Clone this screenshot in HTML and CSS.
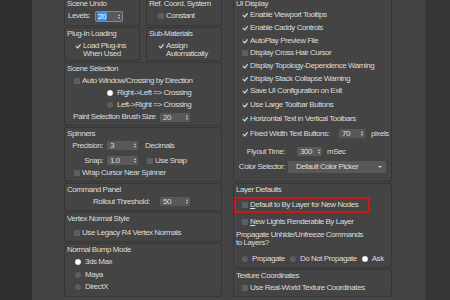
FILE: index.html
```html
<!DOCTYPE html>
<html lang="en">
<head>
<meta charset="UTF-8">
<meta name="viewport" content="width=device-width, initial-scale=1.0">
<title>Preference Settings - General</title>
<link rel="stylesheet" href="styles.css">
</head>
<body>
<div class="window">
    <div class="rail"></div>
    <div class="page">
        <!-- left column -->
        <div class="col col-left">
            <div class="pair">
                <div class="group g-undo">
                    <div class="title">Scene Undo</div>
                    <div class="row">
                        <span class="lbl l-levels">Levels:</span>
                        <span class="spin w26 focused"><span class="val"><span class="sel">20</span></span><span class="arrows"></span></span>
                    </div>
                </div>
                <div class="group g-undo">
                    <div class="title">Ref. Coord. System</div>
                    <div class="row check in9"><span class="cb"></span>Constant</div>
                </div>
            </div>
            <div class="pair">
                <div class="group g-plugin">
                    <div class="title">Plug-In Loading</div>
                    <div class="check multi in8"><span class="cb on"></span><span>Load Plug-ins<br>When Used</span></div>
                </div>
                <div class="group g-plugin">
                    <div class="title">Sub-Materials</div>
                    <div class="check multi in9"><span class="cb on"></span><span>Assign<br>Automatically</span></div>
                </div>
            </div>
            <div class="group">
                <div class="title">Scene Selection</div>
                <div class="row check in7"><span class="cb"></span>Auto Window/Crossing by Direction</div>
                <div class="row radio in40"><span class="rb on"></span>Right-&gt;Left =&gt; Crossing</div>
                <div class="row radio in40"><span class="rb"></span>Left-&gt;Right =&gt; Crossing</div>
                <div class="row">
                    <span class="lbl l-paint">Paint Selection Brush Size</span>
                    <span class="spin w30"><span class="val">20</span><span class="arrows"></span></span>
                </div>
            </div>
            <div class="group">
                <div class="title">Spinners</div>
                <div class="row r-prec">
                    <span class="lbl l-spin">Precision:</span>
                    <span class="spin w31 gap4"><span class="val">3</span><span class="arrows"></span></span>
                    <span class="after-spin">Decimals</span>
                </div>
                <div class="row r-snap">
                    <span class="lbl l-spin">Snap:</span>
                    <span class="spin w31 gap4"><span class="val">1.0</span><span class="arrows"></span></span>
                    <span class="check snap"><span class="cb"></span>Use Snap</span>
                </div>
                <div class="row check in7"><span class="cb"></span>Wrap Cursor Near Spinner</div>
            </div>
            <div class="group g-cmd">
                <div class="title">Command Panel</div>
                <div class="row r-roll">
                    <span class="lbl l-roll">Rollout Threshold:</span>
                    <span class="spin w30"><span class="val">50</span><span class="arrows"></span></span>
                </div>
            </div>
            <div class="group g-vert">
                <div class="title">Vertex Normal Style</div>
                <div class="row check in7"><span class="cb"></span>Use Legacy R4 Vertex Normals</div>
            </div>
            <div class="group g-bump">
                <div class="title">Normal Bump Mode</div>
                <div class="row tall radio in8"><span class="rb on"></span>3ds Max</div>
                <div class="row tall radio in8"><span class="rb"></span>Maya</div>
                <div class="row tall radio in8"><span class="rb"></span>DirectX</div>
            </div>
        </div>

        <!-- right column -->
        <div class="col col-right">
            <div class="group g-ui">
                <div class="title t-ui">UI Display</div>
                <div class="row ui check in6"><span class="cb on"></span>Enable Viewport Tooltips</div>
                <div class="row ui check in6"><span class="cb on"></span>Enable Caddy Controls</div>
                <div class="row ui check in6"><span class="cb on"></span>AutoPlay Preview File</div>
                <div class="row ui check in6"><span class="cb"></span>Display Cross Hair Cursor</div>
                <div class="row ui check in6"><span class="cb on"></span>Display Topology-Dependence Warning</div>
                <div class="row ui check in6"><span class="cb on"></span>Display Stack Collapse Warning</div>
                <div class="row ui check in6"><span class="cb on"></span>Save UI Configuration on Exit</div>
                <div class="row ui-wide check in6"><span class="cb on"></span>Use Large Toolbar Buttons</div>
                <div class="row ui-wide check in6"><span class="cb on"></span>Horizontal Text in Vertical Toolbars</div>
                <div class="row ui-wide check in6">
                    <span class="cb on"></span><span class="lbl l-fixed">Fixed Width Text Buttons:</span>
                    <span class="spin w26"><span class="val">70</span><span class="arrows"></span></span>
                    <span class="unit">pixels</span>
                </div>
                <div class="row r-flyout">
                    <span class="lbl l-form">Flyout Time:</span>
                    <span class="spin w25 flyout"><span class="val">300</span><span class="arrows"></span></span>
                    <span class="unit">mSec</span>
                </div>
                <div class="row r-color">
                    <span class="lbl l-form">Color Selector:</span>
                    <span class="select">Default Color Picker<span class="caret"></span></span>
                </div>
            </div>
            <div class="group g-layer">
                <div class="title">Layer Defaults</div>
                <div class="highlight check"><span class="cb"></span><span><u>D</u>efault to By Layer for New Nodes</span></div>
                <div class="row check in6 r-lights"><span class="cb"></span><span><u>N</u>ew Lights Renderable By Layer</span></div>
                <div class="note">Propagate Unhide/Unfreeze Commands<br>to Layers?</div>
                <div class="row r-prop">
                    <span class="radio in6"><span class="rb"></span>Propagate</span>
                    <span class="radio in5"><span class="rb"></span>Do Not Propagate</span>
                    <span class="radio in5"><span class="rb on"></span>Ask</span>
                </div>
            </div>
            <div class="group g-tex">
                <div class="title">Texture Coordinates</div>
                <div class="row check in6"><span class="cb"></span>Use Real-World Texture Coordinates</div>
            </div>
        </div>
    </div>
    <div class="edge"></div>
</div>
</body>
</html>
```

FILE: styles.css
```css
body {
    margin: 0;
    font-family: "Liberation Sans", Arial, sans-serif;
    font-size: 8px;
    letter-spacing: -0.45px;
    color: #dcdcdc;
    background: #2f2f2f;
}
.window {
    display: flex;
    width: 450px;
    height: 300px;
    overflow: hidden;
}
.rail {
    width: 32px;
    background: #2f2f2f;
}
.page {
    width: 393px;
    padding-left: 32px;
    box-sizing: border-box;
    background: #444444;
    display: flex;
    gap: 11px;
}
.edge {
    flex: 1;
    background: #373737;
}
.col {
    display: flex;
    flex-direction: column;
    gap: 1px;
    margin-top: -3px;
}
.col-left {
    width: 158px;
}
.col-right {
    width: 159px;
}
.pair {
    display: flex;
    gap: 6px;
}
.pair .group {
    flex: 1;
}

/* group boxes */
.group {
    border: 1px solid #363636;
    border-radius: 2px;
    padding: 0 2px 2px;
}
.title {
    height: 12px;
    line-height: 12px;
    white-space: nowrap;
}
.g-undo {
    padding-bottom: 3px;
}
.g-plugin .check {
    margin-top: 2px;
}
.g-cmd {
    padding-bottom: 3px;
}
.g-vert .row {
    margin-top: 2px;
}
.g-bump .row:first-of-type {
    margin-top: 1px;
}
.g-ui {
    padding-bottom: 8px;
}
.t-ui {
    height: 11px;
    line-height: 11px;
}

/* rows */
.row {
    display: flex;
    align-items: center;
    height: 12px;
    line-height: 12px;
    white-space: nowrap;
}
.row.tall {
    height: 12.5px;
}
.row.ui {
    height: 12.7px;
}
.row.ui-wide {
    height: 14.3px;
}
.r-prec {
    height: 11px;
}
.r-snap {
    margin-top: 3px;
    height: 13px;
}
.r-roll {
    height: 11px;
}
.r-flyout {
    margin-top: 5px;
}
.r-color {
    margin-top: 3px;
}
.r-lights {
    margin-top: 3px;
    height: 13px;
}
.r-prop {
    margin-top: 5.5px;
}
.note {
    margin-top: 2.5px;
    line-height: 8px;
    white-space: nowrap;
}

.in5 { margin-left: 5px; }
.in6 { margin-left: 6px; }
.in7 { margin-left: 7px; }
.in8 { margin-left: 8px; }
.in9 { margin-left: 9px; }
.in40 { margin-left: 40px; }

/* labels */
.lbl {
    flex: none;
}
.l-levels {
    margin-left: 1px;
    width: 28px;
}
.l-paint {
    margin-left: 6px;
    width: 87px;
}
.l-spin {
    width: 36px;
    text-align: right;
}
.l-roll {
    margin-left: 26px;
    width: 67px;
}
.l-fixed {
    width: 87px;
}
.l-form {
    width: 49px;
    text-align: right;
}
.after-spin {
    margin-left: 7px;
}
.unit {
    margin-left: 4px;
}
.r-flyout .unit {
    margin-left: 5px;
}

/* checkboxes and radios */
.check, .radio {
    display: flex;
    align-items: center;
    white-space: nowrap;
}
.check {
    gap: 2px;
}
.radio {
    gap: 4px;
}
.check.multi {
    align-items: flex-start;
    line-height: 8px;
}
.check.multi .cb {
    margin-top: 1px;
}
.check.snap {
    margin-left: 9px;
}
.cb {
    flex: none;
    position: relative;
    width: 6px;
    height: 6px;
    background: #5e5e5e;
}
.cb.on {
    background: #4c4c4c;
}
.cb.on::after {
    content: "";
    position: absolute;
    left: 2px;
    top: 0;
    width: 1.5px;
    height: 3.5px;
    border-right: 1.2px solid #e6e6e6;
    border-bottom: 1.2px solid #e6e6e6;
    transform: rotate(40deg);
}
.rb {
    flex: none;
    width: 6px;
    height: 6px;
    border-radius: 50%;
    background: #5e5e5e;
}
.rb.on {
    background: radial-gradient(circle, #ffffff 45%, #a8a8a8 100%);
}

/* spinners */
.spin {
    flex: none;
    display: flex;
    align-items: center;
    height: 9px;
    background: #595959;
    border-radius: 1px;
    line-height: 9px;
}
.spin .val {
    flex: 1;
    padding-left: 3px;
}
.spin .sel {
    background: #3a8ee6;
    color: #fff;
    padding: 0 1px;
}
.spin.focused .val {
    padding-left: 1px;
}
.spin.focused {
    box-shadow: 0 0 0 1px #6a8fb5;
}
.arrows {
    flex: none;
    width: 7px;
    display: flex;
    flex-direction: column;
    align-items: center;
    gap: 1px;
}
.arrows::before,
.arrows::after {
    content: "";
    width: 0;
    height: 0;
    border-left: 1.5px solid transparent;
    border-right: 1.5px solid transparent;
}
.arrows::before {
    border-bottom: 2px solid #d0d0d0;
}
.arrows::after {
    border-top: 2px solid #d0d0d0;
}
.w25 { width: 25px; }
.w26 { width: 26px; }
.w30 { width: 30px; }
.w31 { width: 31px; }
.gap4 { margin-left: 4px; }
.flyout { margin-left: 12px; }

/* dropdown */
.select {
    flex: none;
    display: flex;
    align-items: center;
    justify-content: space-between;
    margin-left: 3px;
    width: 98px;
    height: 12px;
    padding: 0 4px 0 8px;
    box-sizing: border-box;
    background: #585858;
}
.caret {
    width: 0;
    height: 0;
    border-left: 2px solid transparent;
    border-right: 2px solid transparent;
    border-top: 2px solid #d0d0d0;
}

/* red annotation round the first layer option */
.highlight {
    margin: 1px 0 0 -2px;
    width: 136px;
    height: 16px;
    padding-left: 6px;
    box-sizing: border-box;
    border: 2px solid #c81a1c;
}
```
